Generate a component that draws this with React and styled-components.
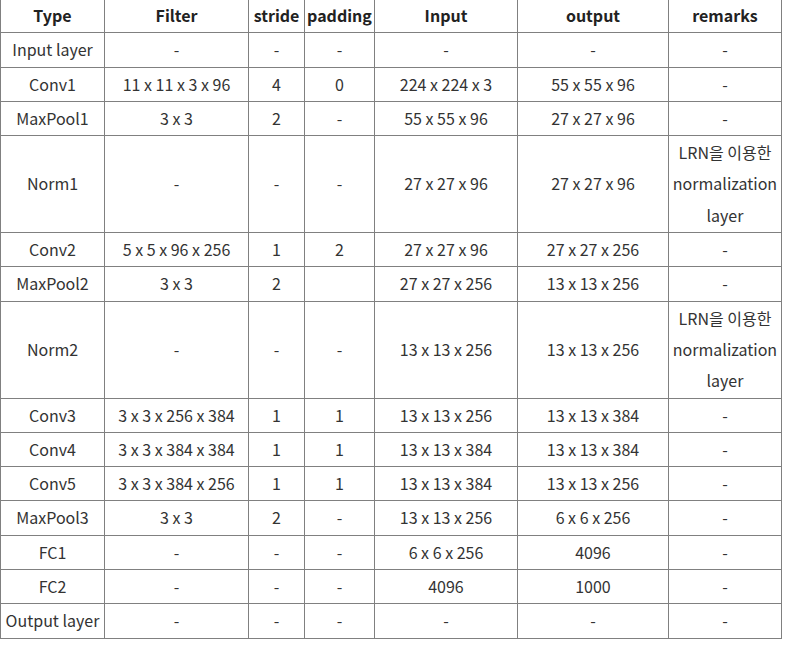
import React from 'react'
import styled, { createGlobalStyle } from 'styled-components'

const GlobalStyle = createGlobalStyle`
  html, body {
    margin: 0;
    padding: 0;
    background: #fff;
  }
  body {
    font-family: 'Noto Sans CJK KR', 'Noto Sans', sans-serif;
    color: #333;
  }
`

const Table = styled.table`
  border-collapse: collapse;
  table-layout: fixed;
  width: 781px;
  margin-top: -2px;
  font-size: 16px;
`

const Th = styled.th`
  border: 1px solid #808080;
  font-weight: 700;
  line-height: 31.3px;
  padding: 1px 0;
  text-align: center;
  color: #222;
`

const Td = styled.td`
  border: 1px solid #808080;
  line-height: 31.3px;
  padding: 1px 0;
  text-align: center;
  white-space: ${({ $wrap }) => ($wrap ? 'normal' : 'nowrap')};
`

const widths = [104, 144, 56, 70, 143, 151, 113]
const headers = ['Type', 'Filter', 'stride', 'padding', 'Input', 'output', 'remarks']

const LRN = 'LRN을 이용한 normalization layer'

const rows = [
  ['Input layer', '-', '-', '-', '-', '-', '-'],
  ['Conv1', '11 x 11 x 3 x 96', '4', '0', '224 x 224 x 3', '55 x 55 x 96', '-'],
  ['MaxPool1', '3 x 3', '2', '-', '55 x 55 x 96', '27 x 27 x 96', '-'],
  ['Norm1', '-', '-', '-', '27 x 27 x 96', '27 x 27 x 96', LRN],
  ['Conv2', '5 x 5 x 96 x 256', '1', '2', '27 x 27 x 96', '27 x 27 x 256', '-'],
  ['MaxPool2', '3 x 3', '2', '', '27 x 27 x 256', '13 x 13 x 256', '-'],
  ['Norm2', '-', '-', '-', '13 x 13 x 256', '13 x 13 x 256', LRN],
  ['Conv3', '3 x 3 x 256 x 384', '1', '1', '13 x 13 x 256', '13 x 13 x 384', '-'],
  ['Conv4', '3 x 3 x 384 x 384', '1', '1', '13 x 13 x 384', '13 x 13 x 384', '-'],
  ['Conv5', '3 x 3 x 384 x 256', '1', '1', '13 x 13 x 384', '13 x 13 x 256', '-'],
  ['MaxPool3', '3 x 3', '2', '-', '13 x 13 x 256', '6 x 6 x 256', '-'],
  ['FC1', '-', '-', '-', '6 x 6 x 256', '4096', '-'],
  ['FC2', '-', '-', '-', '4096', '1000', '-'],
  ['Output layer', '-', '-', '-', '-', '-', '-'],
]

export default function App() {
  return (
    <>
      <GlobalStyle />
      <Table>
        <colgroup>
          {widths.map((w, i) => (
            <col key={i} style={{ width: w }} />
          ))}
        </colgroup>
        <thead>
          <tr>
            {headers.map((h) => (
              <Th key={h}>{h}</Th>
            ))}
          </tr>
        </thead>
        <tbody>
          {rows.map((r, i) => (
            <tr key={i}>
              {r.map((c, j) => (
                <Td key={j} $wrap={j === 6}>
                  {c}
                </Td>
              ))}
            </tr>
          ))}
        </tbody>
      </Table>
    </>
  )
}
